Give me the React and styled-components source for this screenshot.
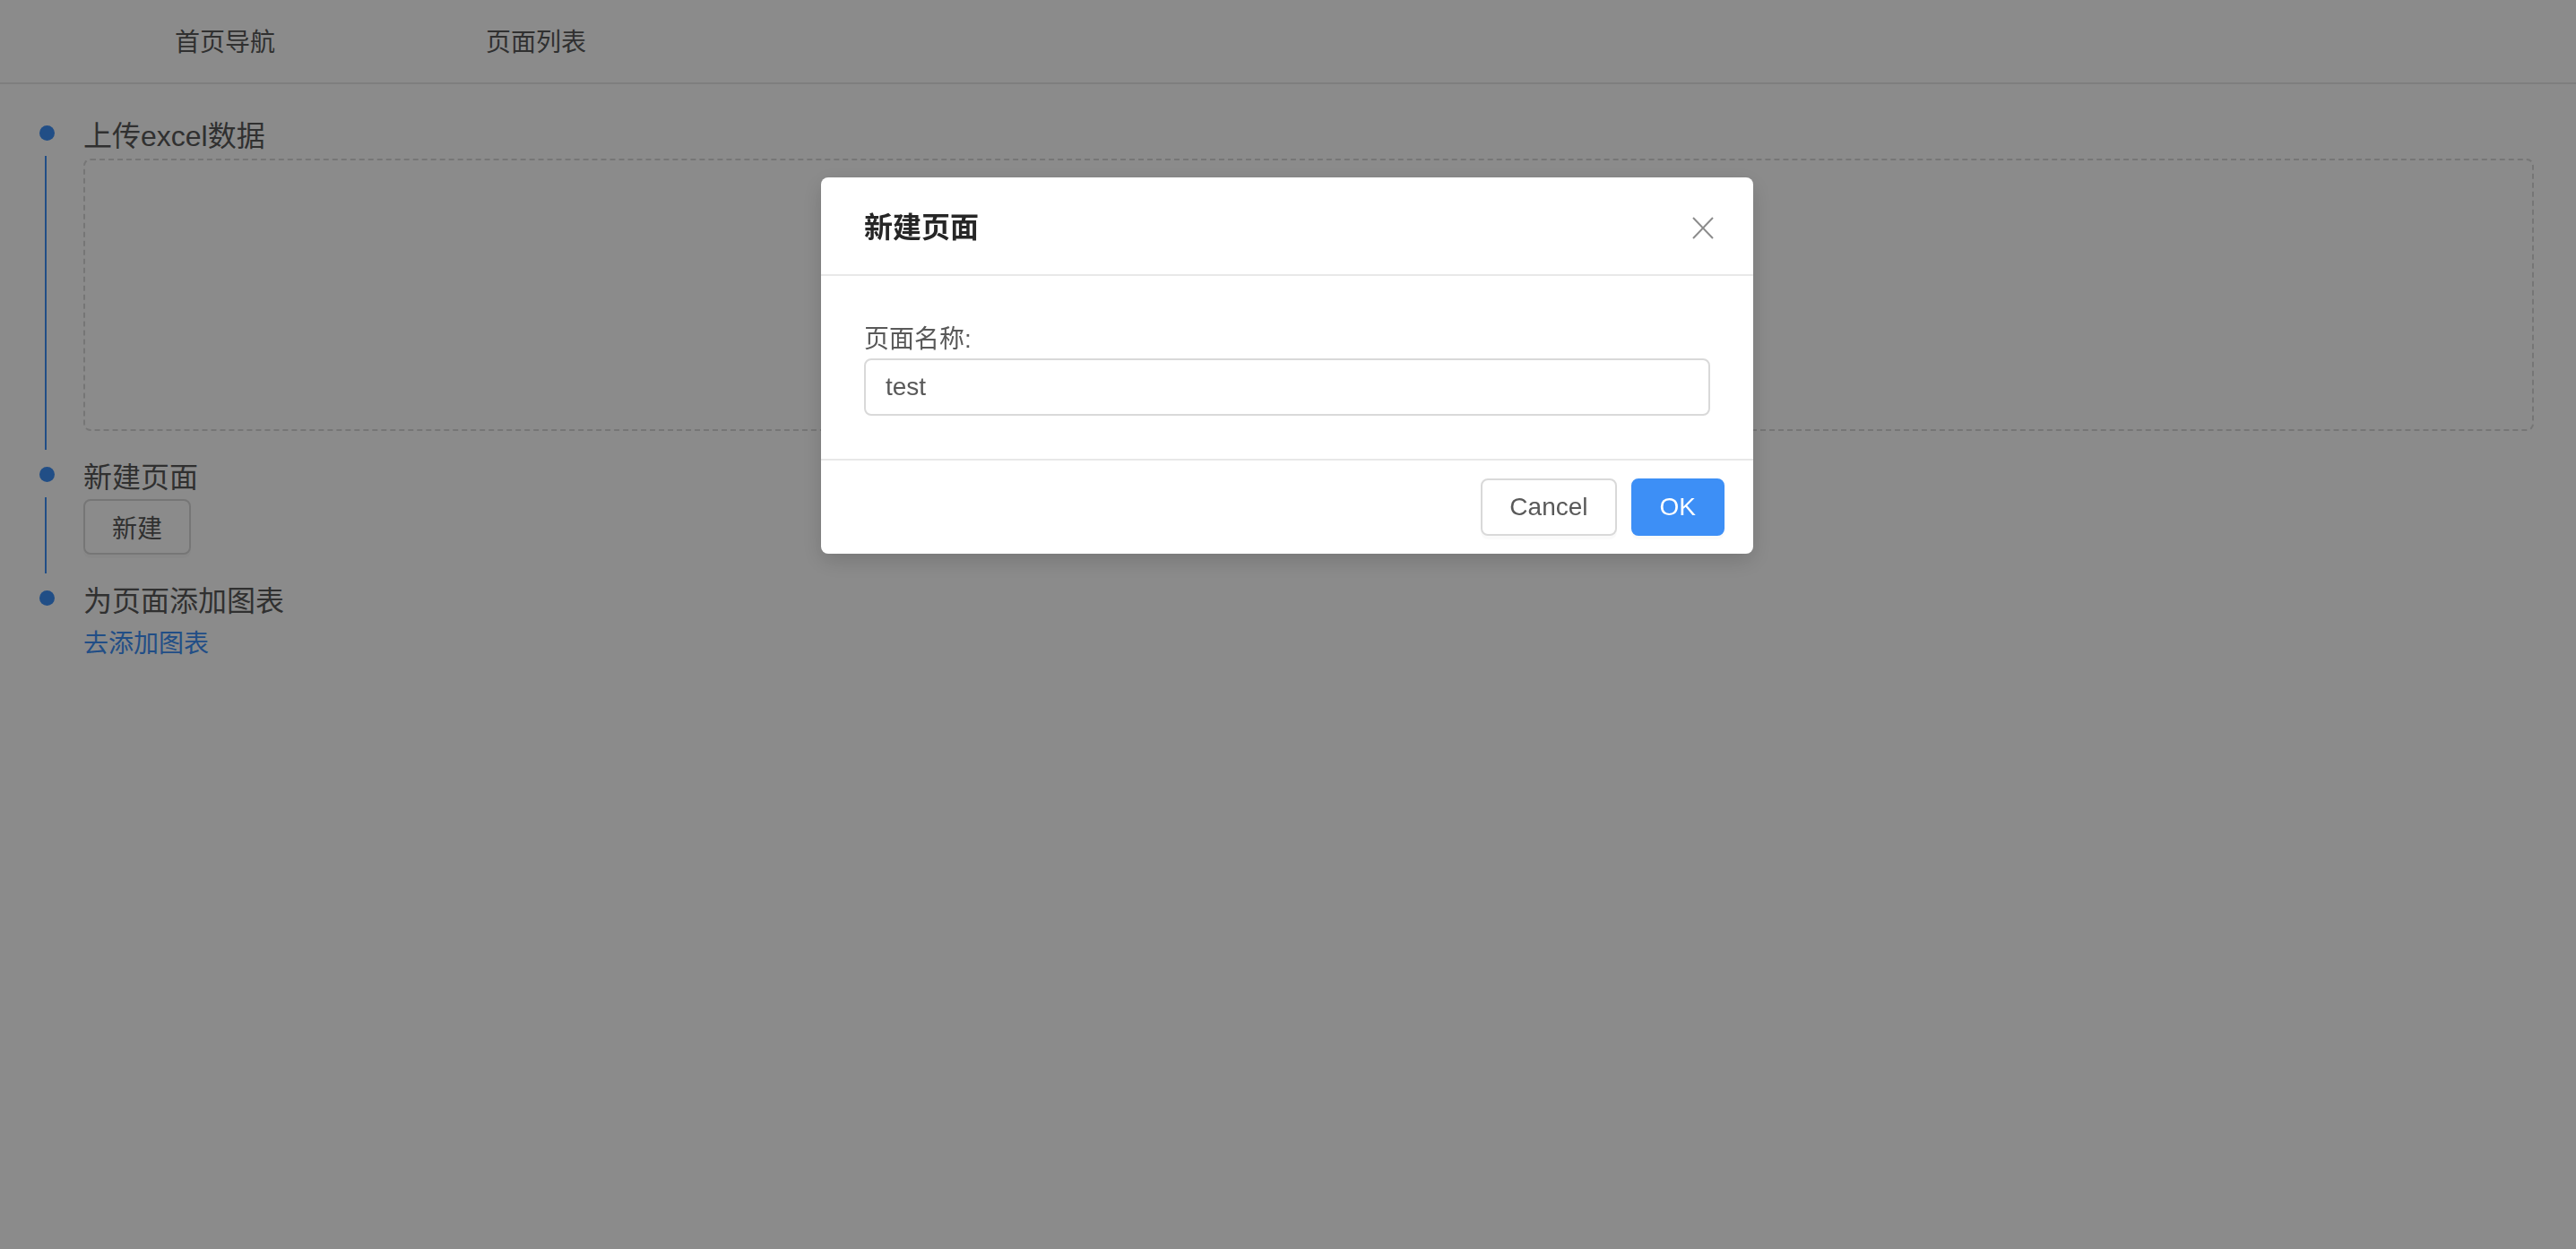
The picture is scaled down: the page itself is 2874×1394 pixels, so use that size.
import styled, { createGlobalStyle } from "styled-components";

const primary = "#3d8ff6";
const textMain = "#595959";

const GlobalStyle = createGlobalStyle`
  html, body {
    margin: 0;
    padding: 0;
    background: #fff;
  }
  body {
    font-family: "Liberation Sans", "Noto Sans CJK SC", sans-serif;
    color: ${textMain};
  }
  * {
    box-sizing: border-box;
  }
`;

const Page = styled.div`
  min-height: 1394px;
  background: #fff;
`;

const NavBar = styled.nav`
  display: flex;
  gap: 155px;
  height: 94px;
  padding-left: 155px;
  border-bottom: 2px solid #e8e8e8;
`;

const NavItem = styled.div`
  padding: 4px 40px 0;
  font-size: 28px;
  line-height: 88px;
  color: ${textMain};
`;

const Steps = styled.main`
  display: flex;
  flex-direction: column;
  padding: 32px 47px 0 44px;
`;

const Step = styled.section`
  display: grid;
  grid-template-columns: 49px 1fr;
  padding-bottom: 26px;
`;

const Rail = styled.div`
  display: flex;
  flex-direction: column;
  align-items: flex-start;
`;

const Dot = styled.span`
  width: 17px;
  height: 17px;
  margin-top: 14px;
  border-radius: 50%;
  background: ${primary};
`;

const Line = styled.span`
  flex: 1;
  width: 2px;
  margin: 17px 0 -21px 6px;
  background: ${primary};
`;

const StepBody = styled.div`
  display: flex;
  flex-direction: column;
  align-items: flex-start;
`;

const StepTitle = styled.h3`
  margin: 0;
  padding-top: 4px;
  font-size: 32px;
  font-weight: 400;
  line-height: 44px;
  color: ${textMain};
`;

const DropZone = styled.div`
  align-self: stretch;
  height: 304px;
  margin-top: 3px;
  border: 2px dashed #d9d9d9;
  border-radius: 8px;
`;

const Button = styled.button`
  height: ${({ $h }) => $h || 64}px;
  padding: 0 30px;
  margin-top: ${({ $mt }) => $mt || 0}px;
  font-family: inherit;
  font-size: 28px;
  color: ${({ $primary }) => ($primary ? "#fff" : textMain)};
  background: ${({ $primary }) => ($primary ? primary : "#fff")};
  border: 2px solid ${({ $primary }) => ($primary ? primary : "#d9d9d9")};
  border-radius: 8px;
  box-shadow: 0 4px 0 rgba(0, 0, 0, 0.02);
  cursor: pointer;
`;

const Link = styled.a`
  margin-top: 3px;
  padding-top: 4px;
  font-size: 28px;
  line-height: 38px;
  color: ${primary};
  text-decoration: none;
`;

const Mask = styled.div`
  position: fixed;
  inset: 0;
  background: rgba(0, 0, 0, 0.455);
`;

const Modal = styled.div`
  position: fixed;
  top: 198px;
  left: 916px;
  width: 1040px;
  background: #fff;
  border-radius: 8px;
  box-shadow: 0 8px 24px rgba(0, 0, 0, 0.15);
`;

const ModalHeader = styled.header`
  padding: 32px 48px;
  border-bottom: 2px solid #e8e8e8;
`;

const ModalTitle = styled.div`
  padding-top: 4px;
  font-size: 32px;
  font-weight: 600;
  line-height: 40px;
  color: #262626;
`;

const Close = styled.button`
  position: absolute;
  top: 0;
  right: 0;
  width: 112px;
  height: 112px;
  display: flex;
  align-items: center;
  justify-content: center;
  padding: 0;
  border: 0;
  background: transparent;
  cursor: pointer;
`;

const ModalBody = styled.div`
  padding: 48px;
`;

const Label = styled.label`
  display: block;
  margin-bottom: 2px;
  padding-top: 4px;
  font-size: 28px;
  line-height: 38px;
  color: ${textMain};
`;

const Input = styled.input`
  display: block;
  width: 100%;
  height: 64px;
  padding: 0 22px;
  font-family: inherit;
  font-size: 28px;
  color: ${textMain};
  border: 2px solid #d9d9d9;
  border-radius: 8px;
  outline: none;
`;

const ModalFooter = styled.footer`
  display: flex;
  justify-content: flex-end;
  gap: 16px;
  padding: 20px 32px;
  border-top: 2px solid #e8e8e8;
`;

const CloseIcon = () => (
  <svg width="24" height="25" viewBox="0 0 24 25">
    <path d="M1 1 L23 24 M23 1 L1 24" stroke="#8c8c8c" strokeWidth="2" fill="none" />
  </svg>
);

const App = () => {
  return (
    <>
      <GlobalStyle />
      <Page>
        <NavBar>
          <NavItem>首页导航</NavItem>
          <NavItem>页面列表</NavItem>
        </NavBar>
        <Steps>
          <Step>
            <Rail>
              <Dot />
              <Line />
            </Rail>
            <StepBody>
              <StepTitle>上传excel数据</StepTitle>
              <DropZone />
            </StepBody>
          </Step>
          <Step>
            <Rail>
              <Dot />
              <Line />
            </Rail>
            <StepBody>
              <StepTitle>新建页面</StepTitle>
              <Button $h={62} $mt={2}>新建</Button>
            </StepBody>
          </Step>
          <Step>
            <Rail>
              <Dot />
            </Rail>
            <StepBody>
              <StepTitle>为页面添加图表</StepTitle>
              <Link href="#">去添加图表</Link>
            </StepBody>
          </Step>
        </Steps>
      </Page>
      <Mask />
      <Modal>
        <ModalHeader>
          <ModalTitle>新建页面</ModalTitle>
        </ModalHeader>
        <Close aria-label="Close">
          <CloseIcon />
        </Close>
        <ModalBody>
          <Label>页面名称:</Label>
          <Input defaultValue="test" />
        </ModalBody>
        <ModalFooter>
          <Button>Cancel</Button>
          <Button $primary>OK</Button>
        </ModalFooter>
      </Modal>
    </>
  );
};

export default App;
